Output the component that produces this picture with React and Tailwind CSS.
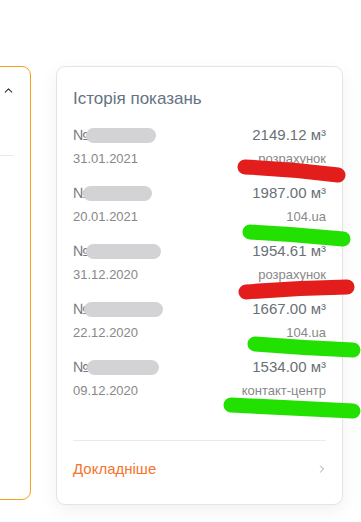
import { ChevronUp, ChevronRight } from "lucide-react";

const readings = [
  { blob: "w-[70px] -ml-[3px]", value: "2149.12", date: "31.01.2021", source: "розрахунок" },
  { blob: "w-[69px] -ml-[6px]", value: "1987.00", date: "20.01.2021", source: "104.ua" },
  { blob: "w-[75px] -ml-[3px]", value: "1954.61", date: "31.12.2020", source: "розрахунок" },
  { blob: "w-[79px] -ml-[5px]", value: "1667.00", date: "22.12.2020", source: "104.ua" },
  { blob: "w-[72px] -ml-[2px]", value: "1534.00", date: "09.12.2020", source: "контакт-центр" },
];

// marker scribbles that sit over the screenshot
const marks = [
  { d: "M245 167 Q292 169 338 175", color: "#e31c1c" },
  { d: "M250 232 Q296 234 343 239", color: "#22e000" },
  { d: "M246 292 Q296 288 347 287", color: "#e31c1c" },
  { d: "M255 344 Q304 348 353 350", color: "#22e000" },
  { d: "M231 405 Q292 408 353 411", color: "#22e000" },
];

export default function App() {
  return (
    <div
      className="relative w-[361px] h-[522px] overflow-hidden bg-white"
      style={{ fontFamily: '"Liberation Sans", Arial, sans-serif' }}
    >
      <div className="flex items-start gap-[25px] pt-[66px]">
        {/* left card, mostly off screen */}
        <div className="shrink-0 w-[300px] -ml-[269px] h-[434px] rounded-[9px] border-[1.5px] border-[#f6a11c] bg-white">
          <div className="flex justify-end pr-[15px] pt-[17px]">
            <ChevronUp size={13} strokeWidth={2} className="text-[#333]" />
          </div>
          <div className="mt-[58px] mr-[16px] border-t border-[#ebebe4]" />
        </div>

        {/* history card */}
        <div className="shrink-0 w-[287px] rounded-[9px] border border-[#e4e4e4] bg-white px-4 pt-[20px] pb-[23px] shadow-[0_6px_18px_rgba(0,0,0,0.06)]">
          <h2 className="text-[17px] leading-[24px] text-[#647383]">
            Історія показань
          </h2>

          <div className="mt-[13px] flex flex-col gap-[14px]">
            {readings.map((r) => (
              <div key={r.date}>
                <div className="flex items-center justify-between h-[22px]">
                  <div className="flex items-center text-[15px] text-[#74787c]">
                    <span>№</span>
                    <span className={`inline-block h-[15px] rounded-full bg-[#d3d3d6] blur-[0.6px] ${r.blob}`} />
                  </div>
                  <span className="text-[15px] text-[#6a7076]">
                    {r.value} м³
                  </span>
                </div>
                <div className="mt-[4px] flex items-center justify-between h-[18px] text-[13px] text-[#888888]">
                  <span>{r.date}</span>
                  <span>{r.source}</span>
                </div>
              </div>
            ))}
          </div>

          <div className="mt-[40px] border-t border-[#ebebe4]" />

          <div className="mt-[16px] flex items-center justify-between h-[24px]">
            <span className="text-[15px] text-[#f5742e]">Докладніше</span>
            <ChevronRight size={12} strokeWidth={2} className="text-[#98a2ad] -mr-[2px]" />
          </div>
        </div>
      </div>

      <svg
        className="pointer-events-none absolute inset-0"
        width="361"
        height="522"
        viewBox="0 0 361 522"
      >
        {marks.map((m, i) => (
          <path
            key={i}
            d={m.d}
            fill="none"
            stroke={m.color}
            strokeWidth="15"
            strokeLinecap="round"
          />
        ))}
      </svg>
    </div>
  );
}
